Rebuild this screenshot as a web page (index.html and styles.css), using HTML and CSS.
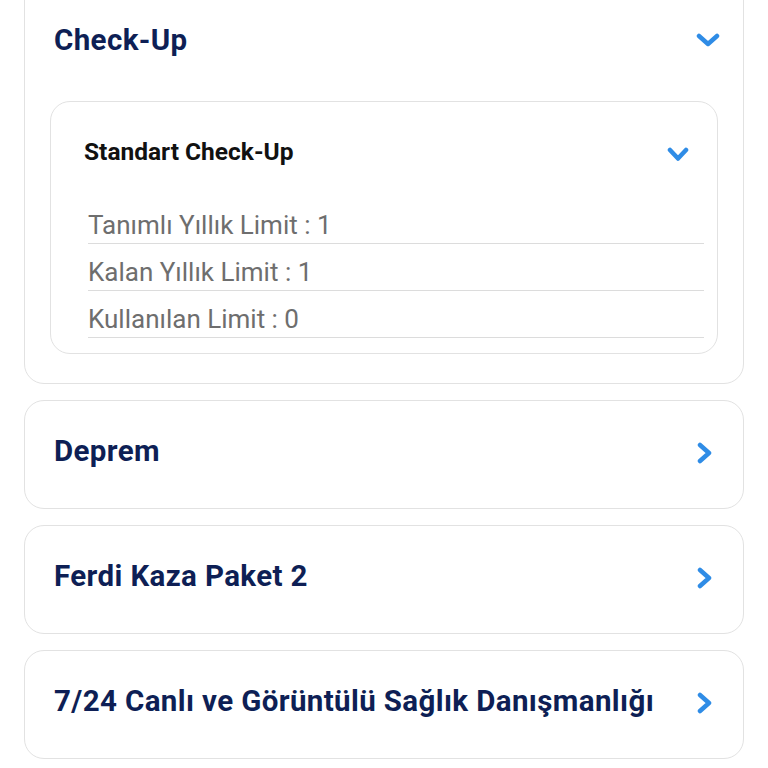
FILE: index.html
```html
<!DOCTYPE html>
<html lang="tr">
<head>
<meta charset="utf-8">
<link rel="stylesheet" href="styles.css">
</head>
<body>
<div class="list">
  <section class="card card-open">
    <div class="card-head">
      <h2 class="title">Check-Up</h2>
      <svg class="chev-down" viewBox="0 0 24 14"><path d="M3 3 L12 11 L21 3" /></svg>
    </div>
    <div class="sub-card">
      <div class="sub-head">
        <h3 class="sub-title">Standart Check-Up</h3>
        <svg class="chev-down-sm" viewBox="0 0 22 15"><path d="M3 3 L11 11.5 L19 3" /></svg>
      </div>
      <ul class="rows">
        <li class="row">Tanımlı Yıllık Limit : 1</li>
        <li class="row">Kalan Yıllık Limit : 1</li>
        <li class="row">Kullanılan Limit : 0</li>
      </ul>
    </div>
  </section>
  <section class="card card-closed">
    <h2 class="title">Deprem</h2>
    <svg class="chev-right" viewBox="0 0 16 22"><path d="M3 3 L12 11 L3 19" /></svg>
  </section>
  <section class="card card-closed">
    <h2 class="title">Ferdi Kaza Paket 2</h2>
    <svg class="chev-right" viewBox="0 0 16 22"><path d="M3 3 L12 11 L3 19" /></svg>
  </section>
  <section class="card card-closed">
    <h2 class="title">7/24 Canlı ve Görüntülü Sağlık Danışmanlığı</h2>
    <svg class="chev-right" viewBox="0 0 16 22"><path d="M3 3 L12 11 L3 19" /></svg>
  </section>
</div>
</body>
</html>
```
FILE: styles.css
```css
* { box-sizing: border-box; }
html, body {
  margin: 0;
  padding: 0;
  background: #ffffff;
  overflow: hidden;
}
body {
  font-family: Roboto, "Noto Sans", sans-serif;
  width: 768px;
  height: 768px;
}
.list {
  display: flex;
  flex-direction: column;
  gap: 16px;
  padding: 0 24px;
  margin-top: -20px;
}
.card {
  border: 1.5px solid #e2e2e2;
  border-radius: 20px;
  background: #fff;
}
.card-open {
  padding: 0 0 29px;
}
.card-head {
  height: 120px;
  display: flex;
  align-items: center;
  justify-content: space-between;
  padding: 0 23px 3px 29px;
}
.title {
  margin: 0;
  font-family: Roboto, "Noto Sans", sans-serif;
  font-weight: 700;
  font-size: 29.5px;
  color: #0e1f55;
  letter-spacing: 0.38px;
}
.chev-down {
  width: 24px;
  height: 14px;
  fill: none;
  stroke: #2f8ce6;
  stroke-width: 4.5;
  stroke-linecap: round;
  stroke-linejoin: round;
}
.sub-card {
  margin: 0 25px;
  border: 1.5px solid #e2e2e2;
  border-radius: 20px;
  padding: 0 13px 15px 0;
}
.sub-head {
  height: 95px;
  display: flex;
  align-items: center;
  justify-content: space-between;
  padding: 3px 15px 0 33px;
}
.sub-title {
  margin: 0;
  font-family: Roboto, sans-serif;
  font-weight: 700;
  font-size: 24.5px;
  color: #111111;
}
.chev-down-sm {
  width: 22px;
  height: 15px;
  margin-top: 6px;
  fill: none;
  stroke: #2f8ce6;
  stroke-width: 4.5;
  stroke-linecap: round;
  stroke-linejoin: round;
}
.rows {
  list-style: none;
  margin: 0;
  padding: 0 0 0 37px;
}
.row {
  height: 47px;
  display: flex;
  align-items: center;
  border-bottom: 1.5px solid #dcdcdc;
  font-family: Roboto, sans-serif;
  font-weight: 400;
  font-size: 26px;
  color: #6e6e6e;
  padding-top: 10px;
}
.card-closed {
  height: 109px;
  display: flex;
  align-items: center;
  justify-content: space-between;
  padding: 0 30px 7px 29px;
}
.chev-right {
  width: 16px;
  height: 22px;
  margin-top: 4px;
  fill: none;
  stroke: #2f8ce6;
  stroke-width: 4.5;
  stroke-linecap: round;
  stroke-linejoin: round;
}
```
